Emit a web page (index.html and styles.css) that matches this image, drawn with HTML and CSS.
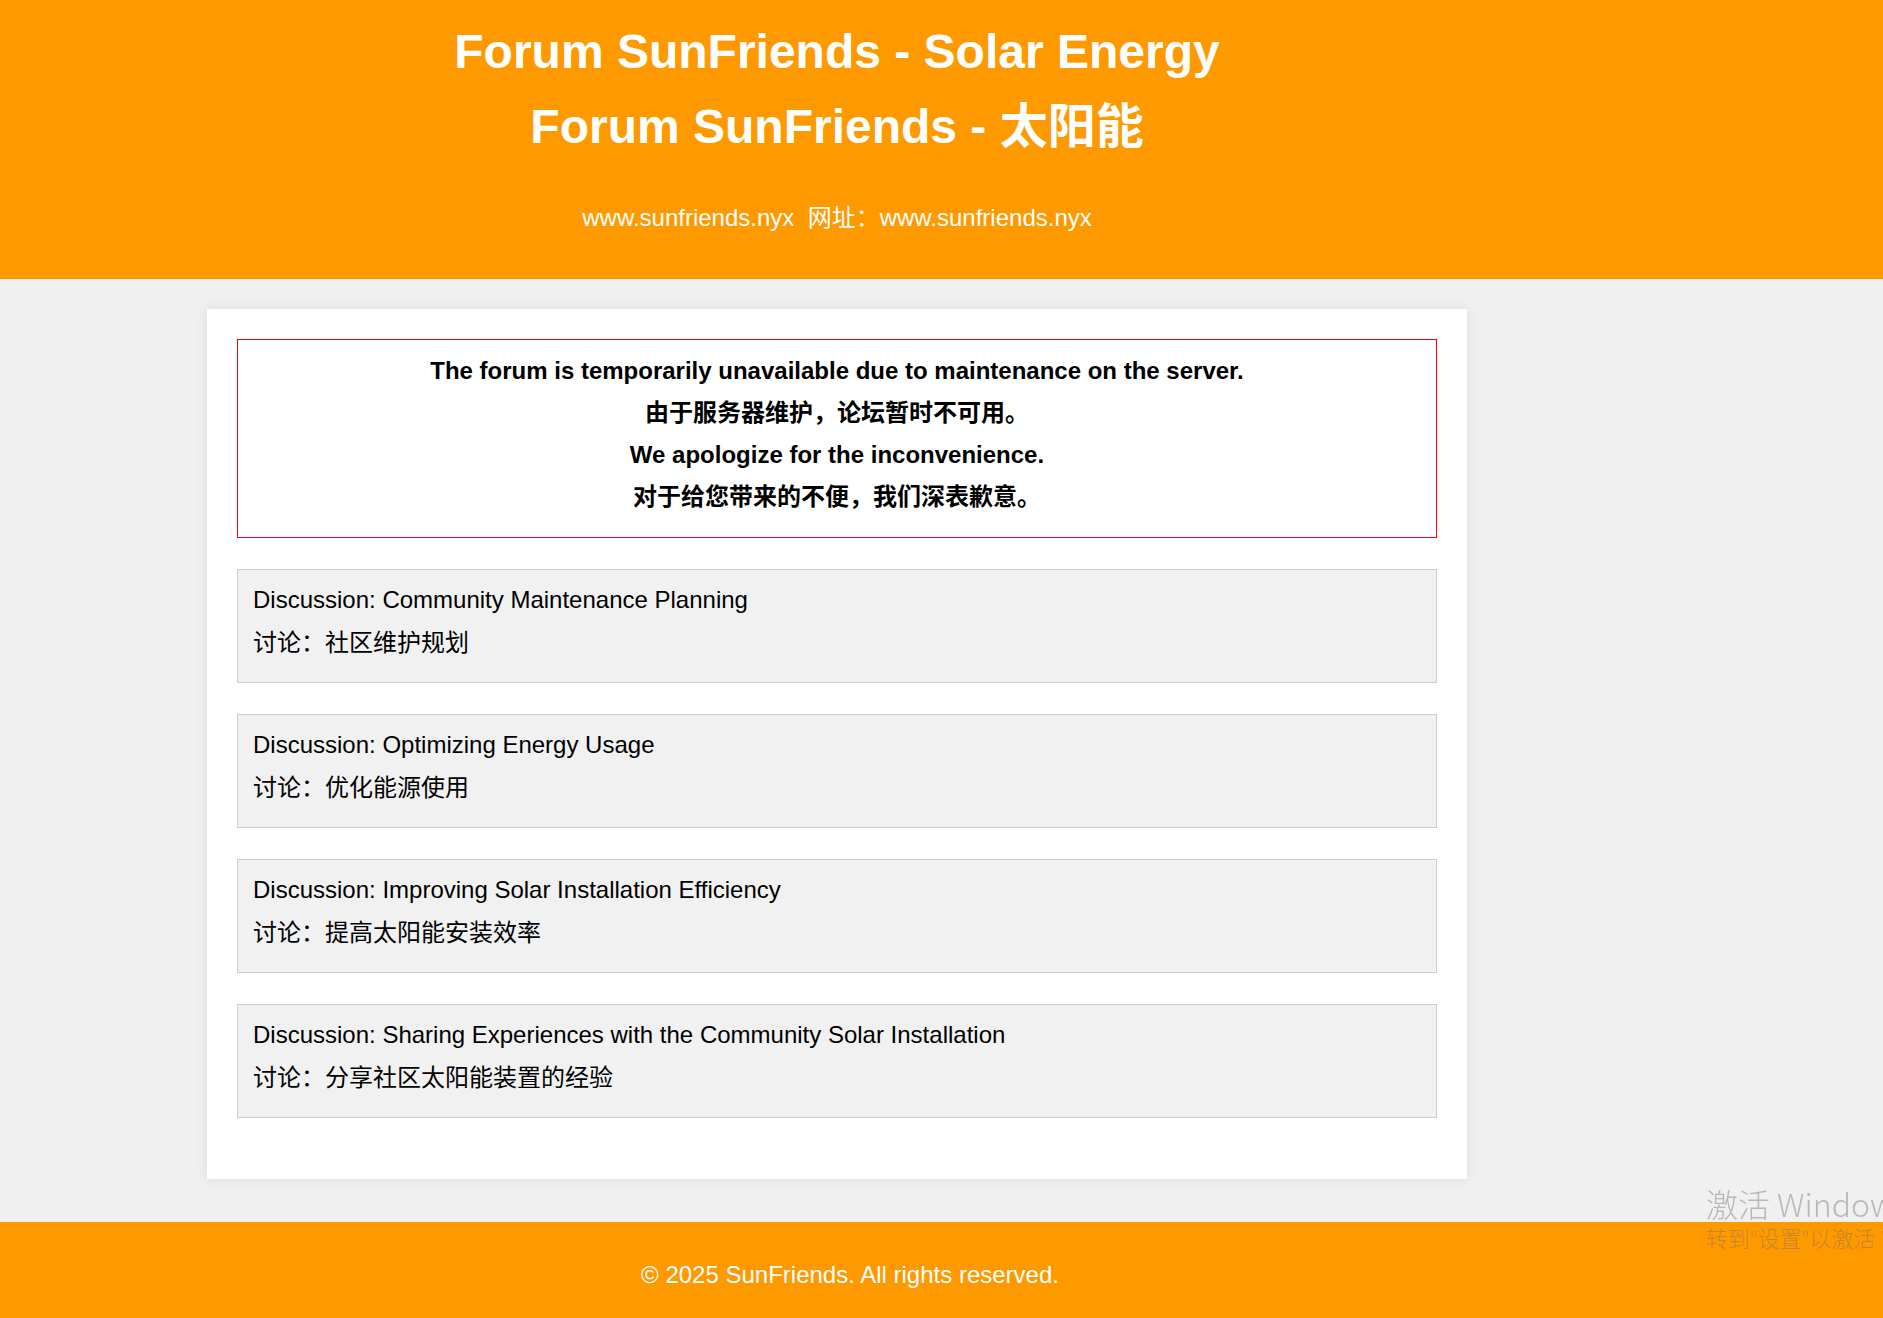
FILE: index.html
```html
<!DOCTYPE html>
<html lang="zh">
<head>
<meta charset="utf-8">
<title>Forum SunFriends - Solar Energy</title>
<link rel="stylesheet" href="styles.css">
</head>
<body>
<header class="site-header">
  <div class="header-inner">
    <h1 class="title">
      <span class="title-line">Forum SunFriends - Solar Energy</span>
      <span class="title-line">Forum SunFriends - 太阳能</span>
    </h1>
    <p class="site-url">www.sunfriends.nyx&nbsp; 网址：www.sunfriends.nyx</p>
  </div>
</header>

<main class="container">
  <div class="alert">
    <p class="alert-line">The forum is temporarily unavailable due to maintenance on the server.</p>
    <p class="alert-line">由于服务器维护，论坛暂时不可用。</p>
    <p class="alert-line">We apologize for the inconvenience.</p>
    <p class="alert-line">对于给您带来的不便，我们深表歉意。</p>
  </div>

  <div class="discussion">
    <p class="discussion-line">Discussion: Community Maintenance Planning</p>
    <p class="discussion-line">讨论：社区维护规划</p>
  </div>
  <div class="discussion">
    <p class="discussion-line">Discussion: Optimizing Energy Usage</p>
    <p class="discussion-line">讨论：优化能源使用</p>
  </div>
  <div class="discussion">
    <p class="discussion-line">Discussion: Improving Solar Installation Efficiency</p>
    <p class="discussion-line">讨论：提高太阳能安装效率</p>
  </div>
  <div class="discussion">
    <p class="discussion-line">Discussion: Sharing Experiences with the Community Solar Installation</p>
    <p class="discussion-line">讨论：分享社区太阳能装置的经验</p>
  </div>
</main>

<footer class="site-footer">
  <div class="footer-inner">© 2025 SunFriends. All rights reserved.</div>
</footer>

<div class="watermark">
  <div class="wm-title">激活 Windows</div>
  <div class="wm-sub">转到"设置"以激活 Windows。</div>
</div>
</body>
</html>
```

FILE: styles.css
```css
html, body {
  margin: 0;
  padding: 0;
}

body {
  background: #f0f0f0;
  font-family: "Liberation Sans", Arial, "Noto Sans CJK SC", sans-serif;
  font-size: 24px;
  color: #000;
  overflow: hidden;
  height: 1318px;
}

.site-header {
  background: #ff9900;
  color: #fff;
  padding: 14px 0 46px;
}

.header-inner {
  width: 1260px;
  margin-left: 207px;
  text-align: center;
}

.title {
  margin: 0;
  font-size: 48px;
  font-weight: bold;
  line-height: 75px;
}

.title-line {
  display: block;
}

.site-url {
  margin: 39px 0 0;
  font-size: 24px;
  line-height: 30px;
}

.container {
  width: 1200px;
  margin: 30px 0 0 207px;
  padding: 30px 30px 30px;
  background: #fff;
  box-shadow: 0 0 12px rgba(0, 0, 0, 0.09);
}

.alert {
  border: 1px solid #ff0000;
  padding: 10px 20px 19px;
  text-align: center;
  font-weight: bold;
  margin-bottom: 31px;
}

.alert-line {
  margin: 0;
  line-height: 42px;
}

.discussion {
  background: #f1f1f1;
  border: 1px solid #cccccc;
  padding: 8px 15px 18px;
  margin-bottom: 31px;
}

.discussion-line {
  margin: 0;
  line-height: 43px;
}

.site-footer {
  background: #ff9900;
  color: #fff;
  margin-top: 43px;
  padding: 39px 0 30px;
}

.footer-inner {
  width: 1286px;
  margin-left: 207px;
  text-align: center;
  line-height: 28px;
}

.watermark {
  position: fixed;
  left: 1706px;
  right: 0;
  top: 1182px;
  overflow: hidden;
  white-space: nowrap;
  color: rgba(110, 110, 110, 0.42);
  font-family: "Noto Sans CJK SC", "Open Sans", sans-serif;
  font-weight: 300;
  pointer-events: none;
}

.wm-title {
  font-size: 32px;
  line-height: 42px;
}

.wm-sub {
  font-family: "Open Sans", "Noto Sans CJK SC", sans-serif;
  font-size: 22px;
  line-height: 28px;
}
```
